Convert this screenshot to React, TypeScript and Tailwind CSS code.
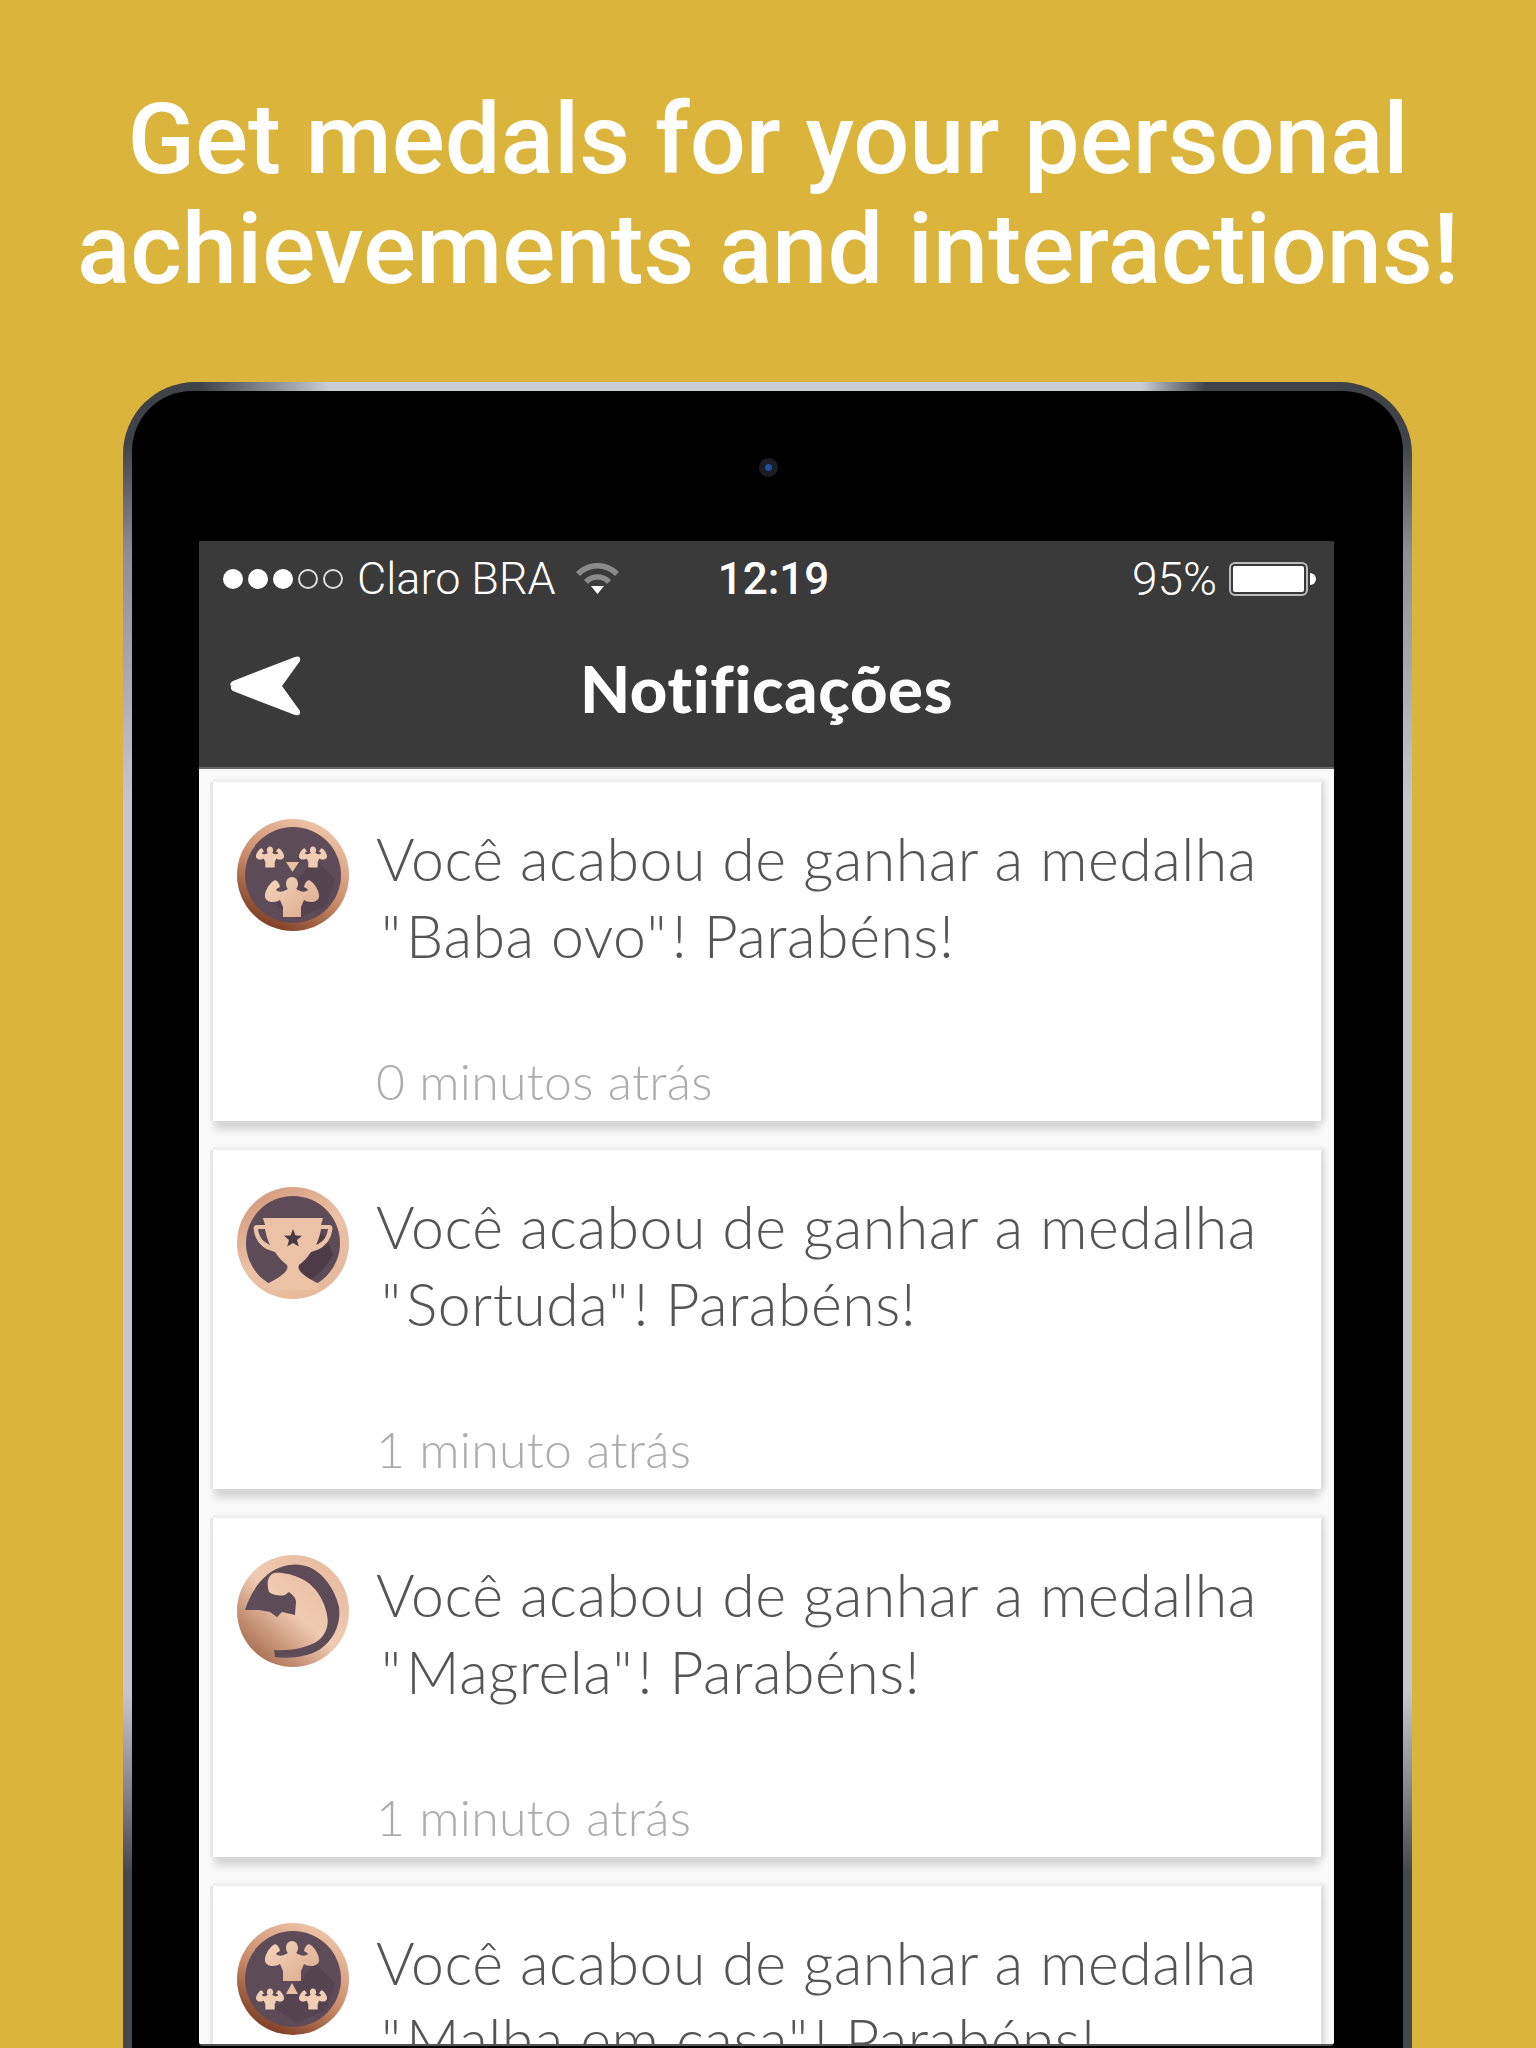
import type { ReactNode } from 'react'

const medalDefs = (
	<defs>
		<linearGradient id="ring" x1="0.8" y1="0.05" x2="0.3" y2="1">
			<stop offset="0" stopColor="#f0c6aa" />
			<stop offset="0.55" stopColor="#c98a68" />
			<stop offset="1" stopColor="#7a3a22" />
		</linearGradient>
		<linearGradient id="cupRing" x1="0" y1="0" x2="0.6" y2="1">
			<stop offset="0" stopColor="#cf9274" />
			<stop offset="0.6" stopColor="#ecc2a6" />
			<stop offset="1" stopColor="#e6b99c" />
		</linearGradient>
		<linearGradient id="armRing" x1="0.9" y1="0.1" x2="0.15" y2="0.95">
			<stop offset="0" stopColor="#e8bb9e" />
			<stop offset="0.5" stopColor="#f0cbb1" />
			<stop offset="1" stopColor="#a4684b" />
		</linearGradient>
		<linearGradient id="peach" x1="0" y1="0" x2="1" y2="1">
			<stop offset="0" stopColor="#f6d6bf" />
			<stop offset="1" stopColor="#dba888" />
		</linearGradient>
		<path
			id="man"
			d="M0-20C3.500-20 6-17 6-13 6-10.500 5-9 4-8L8-6C11-5 14-5 16-7 15-9 13-9 12-10 12.500-13 14-16 17-17L20-15C24-11 27-6 27-1 27 3 23 5 19 5 16 5 14 4 12 3L9 10V20H-9V10L-12 3C-14 4-16 5-19 5-23 5-27 3-27-1-27-6-24-11-20-15L-17-17C-14-16-12.500-13-12-10-13-9-15-9-16-7-14-5-11-5-8-6L-4-8C-5-9-6-10.500-6-13-6-17-3.500-20 0-20Z"
		/>
	</defs>
)

function Medal({ ring, children }: { ring: string; children: ReactNode }) {
	return (
		<svg viewBox="0 0 112 112" className="w-[112px] h-[112px] shrink-0">
			<circle cx="56" cy="56" r="56" fill={ring} />
			{children}
		</svg>
	)
}

function MenMedal({ flip }: { flip?: boolean }) {
	const bigY = flip ? 38 : 78
	const smallY = flip ? 76 : 38
	return (
		<Medal ring="url(#ring)">
			<circle cx="56" cy="56" r="48" fill="#5e4b58" />
			<path d="M78 40l20 20-8 26-30 14-22-14z" fill="#4c3c47" opacity=".45" />
			<use href="#man" transform={`translate(55 ${bigY})`} fill="url(#peach)" />
			<use href="#man" transform={`translate(33 ${smallY}) scale(.52)`} fill="#f1cdb4" />
			<use href="#man" transform={`translate(76 ${smallY}) scale(.52)`} fill="#f1cdb4" />
			{flip ? (
				<path d="M55 60l6 11H49z" fill="#e8bfa3" />
			) : (
				<path d="M49 43h13l-6.500 10z" fill="#e8bfa3" />
			)}
		</Medal>
	)
}

function CupMedal() {
	return (
		<Medal ring="url(#cupRing)">
			<circle cx="56" cy="56" r="47" fill="#5e4b58" />
			<path d="M62 98c12-4 26-14 34-30l-7-18-18-10-16 40z" fill="#463641" opacity=".7" />
			<path
				fill="#ecc2a6"
				fillRule="evenodd"
				d="M26 31H86L84 38H92C95 38 96 40 95 44 94 52 88 60 80 63L74 65C70 71 66 75 62 78 60 82 64 88 82 97L80 103H32L30 97C48 88 52 82 50 78 46 75 42 71 38 65L32 63C24 60 18 52 17 44 16 40 17 38 20 38H28ZM21 42C22 50 26 55 33 58 30 52 29 47 28 42ZM91 42C90 50 86 55 79 58 82 52 83 47 84 42Z"
			/>
			<path
				fill="#4a3945"
				transform="translate(0 -2)"
				d="M56 44l2.500 6.500 6.500.3-5 4.200 1.800 6.500L56 58l-5.800 3.500 1.800-6.500-5-4.200 6.500-.3z"
			/>
		</Medal>
	)
}

function ArmMedal() {
	return (
		<Medal ring="url(#armRing)">
			<path
				fill="#5e4b58"
				d="M8 55C12 42 20 28 30 20 40 11 58 6 72 12 86 18 98 34 102 52 104 68 98 84 82 95 70 102 52 104 38 102L37 95C50 96 70 94 82 85 90 78 92 68 90 60 88 46 78 30 65 24 55 19 44 17 37 18 31 20 29 28 32 37 37 41 44 41 48 40L52 37C56 40 59 43 59 47L58 60 45 57 40 62 33 57 22 55Z"
			/>
		</Medal>
	)
}

const notifications = [
	{ medal: <MenMedal />, name: 'Baba ovo', time: '0 minutos atrás' },
	{ medal: <CupMedal />, name: 'Sortuda', time: '1 minuto atrás' },
	{ medal: <ArmMedal />, name: 'Magrela', time: '1 minuto atrás' },
	{ medal: <MenMedal flip />, name: 'Malha em casa', time: '2 minutos atrás' },
]

function NotificationCard({ medal, name, time }: (typeof notifications)[number]) {
	return (
		<div className="h-[339px] shrink-0 mb-[29px] bg-white pl-[24px] pt-[37px] flex gap-[27px] font-['Lato'] shadow-[0_-3px_0_#eeeeee,-3px_0_0_#e8e8e8,3px_0_5px_1px_#dcdcdc,0_10px_8px_-2px_#cfcfcf]">
			{medal}
			<div className="flex flex-col">
				<p className="mt-[1px] text-[59px] leading-[77px] tracking-[0.5px] font-light text-[#555555] whitespace-nowrap">
					Você acabou de ganhar a medalha
					<br />
					<span className="ml-[5px] tracking-[5px]">"</span>
					{name}
					<span className="tracking-[5px]">"</span>! Parabéns!
				</p>
				<p className="mt-[77px] text-[50px] leading-[60px] tracking-[0.3px] font-light text-[#adadad] whitespace-nowrap">
					{time}
				</p>
			</div>
		</div>
	)
}

export default function App() {
	return (
		<div className="w-[1536px] h-[2048px] overflow-hidden bg-[#dbb43b] font-['Roboto',sans-serif]">
			<svg width="0" height="0" className="absolute">
				{medalDefs}
			</svg>

			<h1 className="pt-[84px] text-center text-[99px] leading-[110px] font-medium text-white">
				Get medals for your personal
				<br />
				achievements and interactions!
			</h1>

			{/* tablet frame, metal edge is two gradients */}
			<div className="ml-[123px] mt-[78px] w-[1289px] h-[1800px] rounded-t-[72px] pt-[9px] px-[9px] [background:linear-gradient(90deg,#3f4246_6%,#c9ccd1_16%,#c9ccd1_79%,#3f4246_84%)_top/100%_12px_no-repeat,linear-gradient(180deg,#3f4246_60px,#8d8f94_170px,#c5c7cd_420px,#c5c7cd_1310px,#8a8b90_1400px,#45484c_1490px)]">
				<div className="h-full rounded-t-[60px] bg-black pt-[150px] pl-[67px] pr-[69px]">
					<div className="h-[1505px] bg-white flex flex-col overflow-hidden rounded-b-[4px] border-b-2 border-[#555]">
						{/* status + nav bar */}
						<div className="h-[228px] shrink-0 bg-[#3a3a3a] border-b-2 border-[#666] text-white">
							<div className="h-[62px] mt-[2px] pt-[10px] pl-[24px] pr-[18px] flex items-center text-[45px] font-light">
								<div className="flex items-center gap-[5px] w-[125px]">
									<span className="w-[20px] h-[20px] rounded-full bg-white" />
									<span className="w-[20px] h-[20px] rounded-full bg-white" />
									<span className="w-[20px] h-[20px] rounded-full bg-white" />
									<span className="w-[20px] h-[20px] rounded-full border-2 border-[#ddd]" />
									<span className="w-[20px] h-[20px] rounded-full border-2 border-[#ddd]" />
								</div>
								<span className="ml-[9px]">Claro BRA</span>
								<svg viewBox="0 0 45 32" className="w-[45px] h-[32px] ml-[19px]">
									<path d="M1 9a30 30 0 0 1 43 0l-4 4a24 24 0 0 0-35 0z" fill="#8a8a8a" />
									<path d="M9 17a19 19 0 0 1 27 0l-4 4a13 13 0 0 0-19 0z" fill="#8a8a8a" />
									<path d="M16 23h13l-6.500 8z" fill="#fff" />
								</svg>
								<span className="ml-[98px] font-medium text-[44px]">12:19</span>
								<span className="ml-auto text-[46px]">95%</span>
								<div className="ml-[12px] w-[79px] h-[34px] rounded-[6px] border-2 border-[#bbb] p-[2px]">
									<div className="h-full bg-white rounded-[2px]" />
								</div>
								<div className="w-[6px] h-[12px] ml-[2px] bg-white rounded-r-full" />
							</div>
							<div className="relative h-[158px] flex items-center justify-center">
								<svg viewBox="0 0 72 60" className="absolute left-[30px] top-[51px] w-[72px] h-[60px]">
									<path
										d="M2 30Q0 27 4 25L66 1q6-2 5 4L53 30l18 25q1 5-5 4L4 35q-3-2-2-5z"
										fill="#fff"
									/>
								</svg>
								<span className="font-['Lato'] font-black text-[65px] tracking-[0.7px] mt-[10px]">
									Notificações
								</span>
							</div>
						</div>

						{/* list */}
						<div className="flex-1 flex flex-col pl-[14px] pr-[13px] pt-[13px] bg-[#fafafa]">
							{notifications.map((n) => (
								<NotificationCard key={n.name} {...n} />
							))}
						</div>
					</div>
				</div>
			</div>

			{/* camera, sits on the black bezel */}
			<div className="absolute left-[759px] top-[458px] w-[19px] h-[19px] rounded-full bg-[#1a1d24] flex items-center justify-center">
				<div className="w-[7px] h-[7px] rounded-full bg-[#1d4f9c]" />
			</div>
		</div>
	)
}
